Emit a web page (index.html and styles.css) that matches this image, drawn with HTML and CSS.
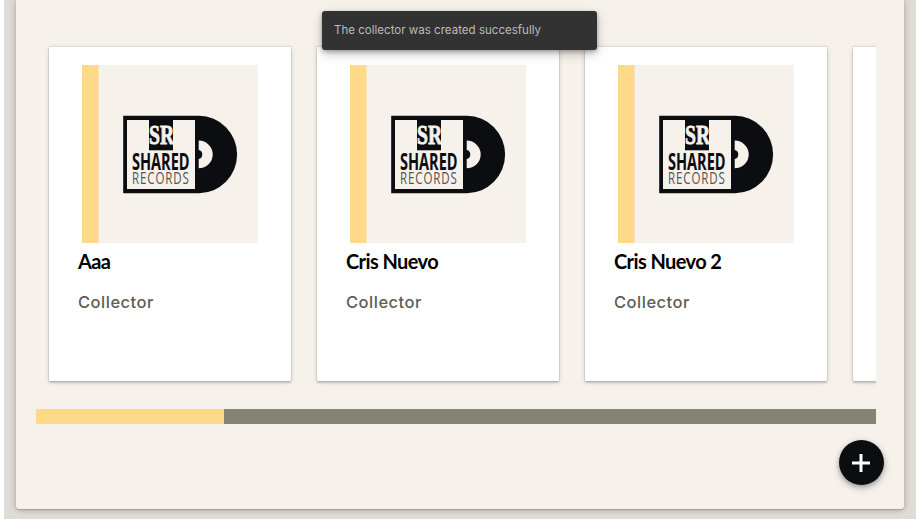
FILE: index.html
```
<!DOCTYPE html>
<html lang="en">
<head>
<meta charset="utf-8">
<title>Collectors</title>
<link rel="stylesheet" href="styles.css">
</head>
<body>
<svg class="defs" aria-hidden="true">
  <symbol id="cover" viewBox="0 0 176 178">
    <rect width="176" height="178" fill="#f6f1eb"/>
    <rect width="16.5" height="178" fill="#ffd98a"/>
    <path d="M41.2 50.8H117A38 38.6 0 0 1 117 128.2H41.2Z" fill="#0b0d11"/>
    <path d="M116.7 75.6A14 13.8 0 0 1 116.7 103.2V94A4.5 4.6 0 0 0 116.7 85Z" fill="#f6f1eb"/>
    <rect x="45" y="55" width="68" height="69" fill="#f6f1eb"/>
    <rect x="67" y="54" width="24" height="31.3" fill="#0b0d11"/>
  </symbol>
</svg>
<div class="app">
  <main class="panel">
    <section class="carousel">
      <div class="cards">
        <article class="card">
          <svg class="cover" viewBox="0 0 176 178">
            <use href="#cover"/>
            <text class="logo-sr" x="67" y="79.3" textLength="25" lengthAdjust="spacingAndGlyphs">SR</text>
            <text class="logo-shared" x="50" y="105" textLength="57.5" lengthAdjust="spacingAndGlyphs">SHARED</text>
            <text class="logo-records" transform="translate(50 118.8) scale(.72 1)" textLength="79" lengthAdjust="spacing">RECORDS</text>
          </svg>
          <h2>Aaa</h2>
          <p>Collector</p>
        </article>
        <article class="card">
          <svg class="cover" viewBox="0 0 176 178">
            <use href="#cover"/>
            <text class="logo-sr" x="67" y="79.3" textLength="25" lengthAdjust="spacingAndGlyphs">SR</text>
            <text class="logo-shared" x="50" y="105" textLength="57.5" lengthAdjust="spacingAndGlyphs">SHARED</text>
            <text class="logo-records" transform="translate(50 118.8) scale(.72 1)" textLength="79" lengthAdjust="spacing">RECORDS</text>
          </svg>
          <h2>Cris Nuevo</h2>
          <p>Collector</p>
        </article>
        <article class="card">
          <svg class="cover" viewBox="0 0 176 178">
            <use href="#cover"/>
            <text class="logo-sr" x="67" y="79.3" textLength="25" lengthAdjust="spacingAndGlyphs">SR</text>
            <text class="logo-shared" x="50" y="105" textLength="57.5" lengthAdjust="spacingAndGlyphs">SHARED</text>
            <text class="logo-records" transform="translate(50 118.8) scale(.72 1)" textLength="79" lengthAdjust="spacing">RECORDS</text>
          </svg>
          <h2>Cris Nuevo 2</h2>
          <p>Collector</p>
        </article>
        <article class="card"></article>
      </div>
      <div class="track"><div class="thumb"></div></div>
    </section>
    <button class="fab" aria-label="Add collector"><svg viewBox="0 0 24 24"><path d="M12 3V21M3 12H21"/></svg></button>
  </main>
</div>
<div class="toast" role="status">The collector was created succesfully</div>
</body>
</html>
```
FILE: styles.css
```
* { box-sizing: border-box; }
body {
  margin: 0;
  height: 525px;
  padding: 0 2px 0 4px;
  overflow: hidden;
  background: #fff;
  font-family: "Liberation Sans", sans-serif;
}
.defs { display: block; width: 0; height: 0; }
.app {
  height: 519px;
  padding: 0 12px 10px;
  overflow: hidden;
  background: linear-gradient(#dce0e4, #dce0e4) 4px 514px / 904px 1px no-repeat, #e0dbd4;
}
.panel {
  height: 509px;
  padding: 34px 28px 0 20px;
  background: #f6f1eb;
  border-radius: 0 0 3px 3px;
  box-shadow: 0 1px 1px rgba(0,0,0,.18), 0 1px 6px rgba(0,0,0,.25);
}
.carousel { overflow: hidden; }
.cards {
  display: flex;
  gap: 26px;
  height: 375px;
  padding: 13px 0 0 13px;
}
.card {
  flex: 0 0 242px;
  height: 334px;
  padding: 18px 29px 0;
  background: #fff;
  border-radius: 1px;
  box-shadow: 0 0 0 1px rgba(0,0,0,.05), 0 2px 2px rgba(0,0,0,.14), 0 1px 5px rgba(0,0,0,.15);
}
.cover { display: block; width: 176px; height: 178px; margin-left: 4px; }
.card h2 {
  margin: 4px 0 0;
  font: 700 20px/28px Lato, sans-serif;
  letter-spacing: -.6px;
  color: #000;
  white-space: nowrap;
}
.card p {
  margin: 15px 0 0;
  font: 500 16.5px/24px Inter, sans-serif;
  letter-spacing: .5px;
  color: #5f5d55;
}
.logo-sr { font: 700 27px "Liberation Serif", serif; fill: #f6f1eb; stroke: #f6f1eb; stroke-width: .9px; }
.logo-shared { font: 700 22.5px "Open Sans", sans-serif; fill: #0b0d11; }
.logo-records { font: 400 16px "Open Sans", sans-serif; fill: #55534f; }
.track { height: 15px; background: #858375; }
.thumb { width: 188px; height: 15px; background: #ffd98a; }
.fab {
  display: flex;
  align-items: center;
  justify-content: center;
  width: 45px;
  height: 45px;
  margin: 16px -8px 0 auto;
  padding: 0;
  border: 0;
  border-radius: 50%;
  background: #0b0d11;
  box-shadow: 0 2px 4px rgba(0,0,0,.25), 0 3px 9px rgba(0,0,0,.18);
}
.fab svg { width: 24px; height: 24px; margin-right: 1px; fill: none; stroke: #fff; stroke-width: 3; }
.toast {
  position: absolute;
  top: 11px;
  left: 322px;
  width: 275px;
  height: 39px;
  padding: 0 12px;
  border-radius: 3px;
  background: #323232;
  box-shadow: 0 2px 4px rgba(0,0,0,.28), 0 4px 12px rgba(0,0,0,.2);
  color: #bcbcbc;
  font: 400 11.5px/38px Inter, sans-serif;
  letter-spacing: .02px;
  white-space: nowrap;
}
```
